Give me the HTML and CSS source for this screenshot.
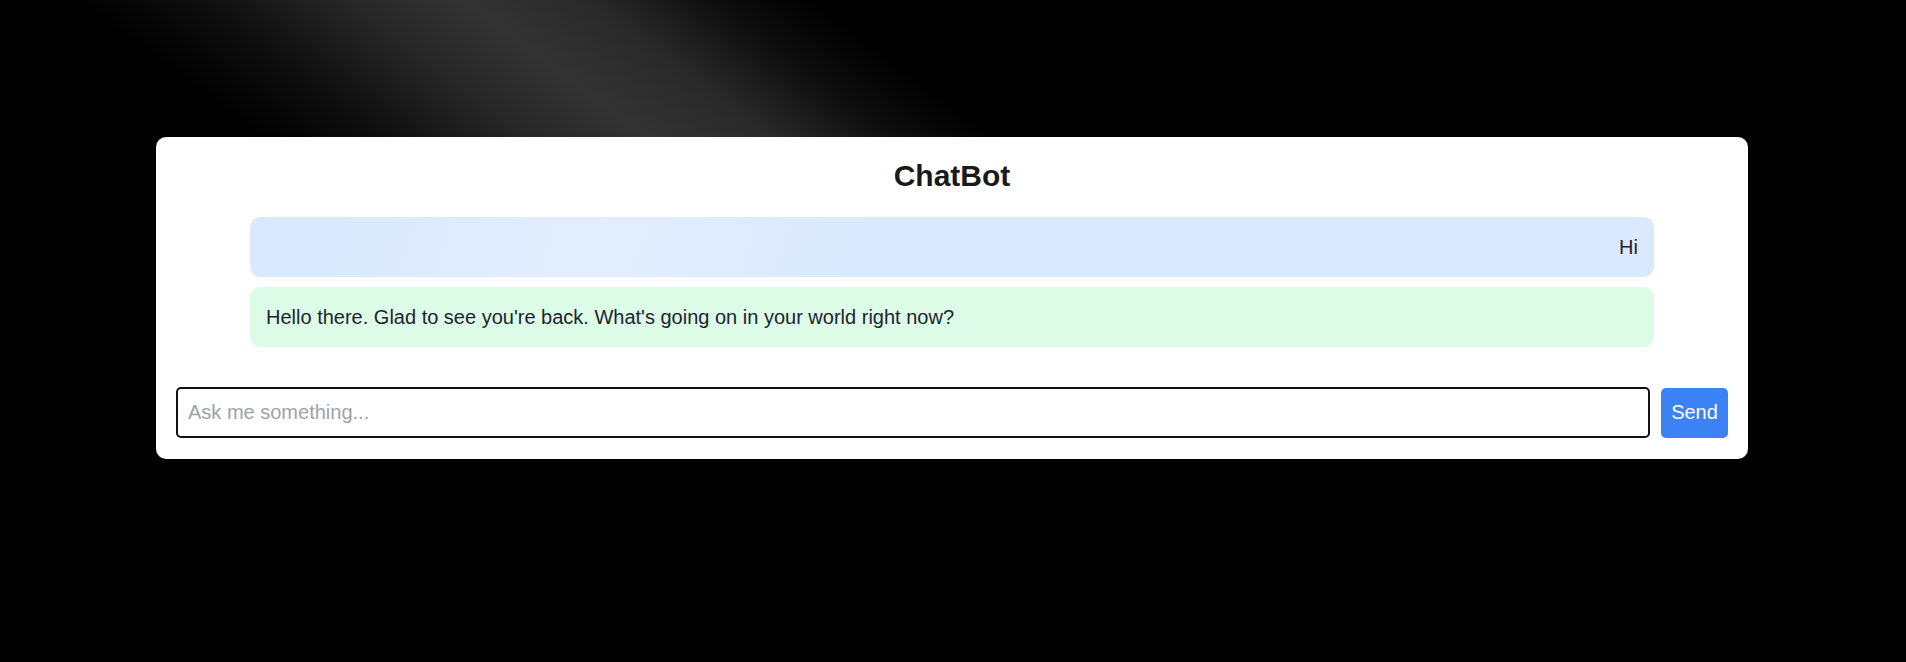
FILE: index.html
```html
<!DOCTYPE html>
<html lang="en">
<head>
<meta charset="utf-8">
<title>ChatBot</title>
<link rel="stylesheet" href="styles.css">
</head>
<body>
<div class="page">
  <main class="card">
    <h2 class="title">ChatBot</h2>
    <div class="messages">
      <div class="bubble bubble-user">Hi</div>
      <div class="bubble bubble-bot">Hello there. Glad to see you're back. What's going on in your world right now?</div>
    </div>
    <form class="composer">
      <input class="composer-input" type="text" placeholder="Ask me something...">
      <button class="composer-send" type="button">Send</button>
    </form>
  </main>
</div>
</body>
</html>
```

FILE: styles.css
```css
html, body {
  margin: 0;
  padding: 0;
  height: 100%;
}

body {
  background-color: #000;
  background-image: linear-gradient(37deg,
    #000 12%,
    #0d0d0d 18%,
    #262626 25%,
    #333 31%,
    #292929 37%,
    #0d0d0d 43%,
    #000 48%);
  background-size: 100% 137px;
  background-repeat: no-repeat;
  font-family: "Liberation Sans", Arial, sans-serif;
  font-size: 20px;
  color: #1f2937;
}

.page {
  padding: 137px 0 0 156px;
}

.card {
  width: 1592px;
  box-sizing: border-box;
  background: #fff;
  border-radius: 10px;
  padding: 20px 20px 21px;
}

.title {
  margin: 2px 0 24px;
  text-align: center;
  font-size: 30px;
  font-weight: bold;
  line-height: 34px;
  color: #1a1a1a;
}

.messages {
  display: flex;
  flex-direction: column;
  gap: 10px;
  margin: 0 74px 40px;
}

.bubble {
  padding: 16px 16px;
  line-height: 28px;
  border-radius: 10px;
  font-size: 20px;
  color: #1f2330;
}

.bubble-user {
  text-align: right;
  background: linear-gradient(110deg, #dbe9fe 5%, #e2eefd 25%, #dbe9fe 45%);
}

.bubble-bot {
  text-align: left;
  background: #dcfce7;
}

.composer {
  display: flex;
  align-items: center;
  gap: 11px;
  margin: 0;
}

.composer-input {
  flex: 1;
  height: 51px;
  box-sizing: border-box;
  border: 2px solid #111;
  border-radius: 5px;
  padding: 0 10px;
  font-family: "Liberation Sans", Arial, sans-serif;
  font-size: 20px;
  color: #1f2937;
  background: #fff;
  outline: none;
}

.composer-input::placeholder {
  color: #9ca3af;
}

.composer-send {
  height: 50px;
  width: 67px;
  box-sizing: border-box;
  border: none;
  border-radius: 5px;
  background: #3b82f6;
  color: #fff;
  font-family: "Liberation Sans", Arial, sans-serif;
  font-size: 20px;
  padding: 0;
  cursor: pointer;
}
```
